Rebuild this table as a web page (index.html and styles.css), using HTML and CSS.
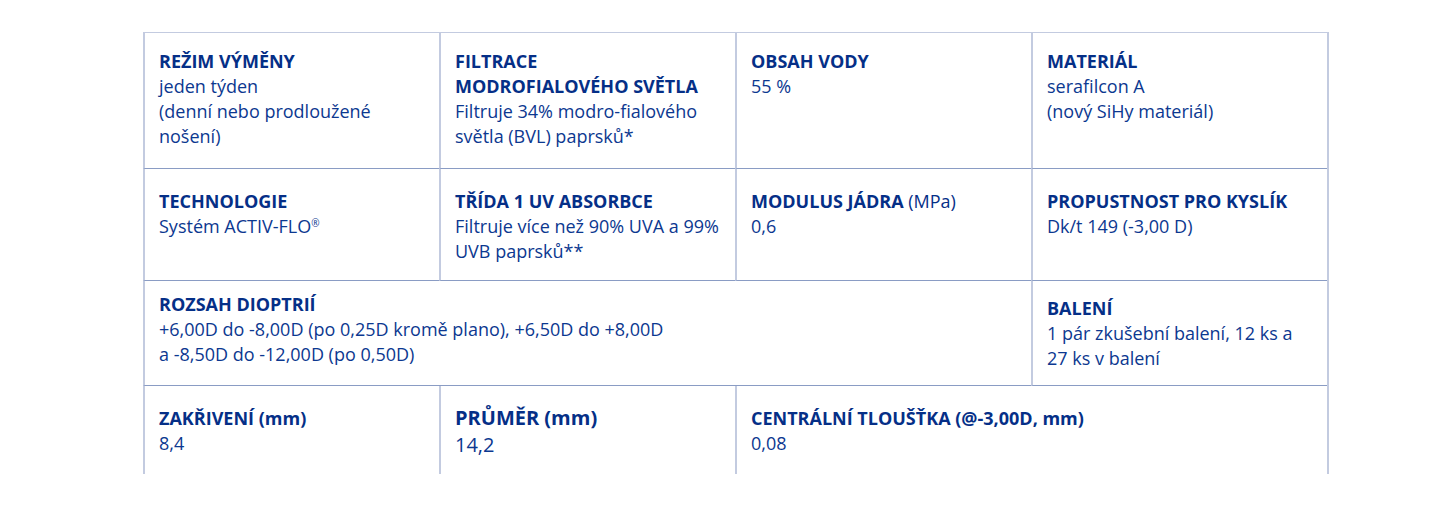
FILE: index.html
```html
<!DOCTYPE html>
<html lang="cs">
<head>
<meta charset="utf-8">
<title>Parametry</title>
<link rel="stylesheet" href="styles.css">
</head>
<body>
<div class="specs">
  <div class="cell r1">
    <div class="h">REŽIM VÝMĚNY</div>
    <div class="v">jeden týden<br>(denní nebo prodloužené<br>nošení)</div>
  </div>
  <div class="cell r1">
    <div class="h">FILTRACE<br>MODROFIALOVÉHO SVĚTLA</div>
    <div class="v">Filtruje 34% modro-fialového<br>světla (BVL) paprsků*</div>
  </div>
  <div class="cell r1">
    <div class="h">OBSAH VODY</div>
    <div class="v">55 %</div>
  </div>
  <div class="cell r1">
    <div class="h">MATERIÁL</div>
    <div class="v">serafilcon A<br>(nový SiHy materiál)</div>
  </div>

  <div class="cell r2">
    <div class="h">TECHNOLOGIE</div>
    <div class="v">Systém ACTIV-FLO<sup>®</sup></div>
  </div>
  <div class="cell r2">
    <div class="h">TŘÍDA 1 UV ABSORBCE</div>
    <div class="v">Filtruje více než 90% UVA a 99%<br>UVB paprsků**</div>
  </div>
  <div class="cell r2">
    <div class="h">MODULUS JÁDRA <span class="unit">(MPa)</span></div>
    <div class="v">0,6</div>
  </div>
  <div class="cell r2">
    <div class="h">PROPUSTNOST PRO KYSLÍK</div>
    <div class="v">Dk/t 149 (-3,00 D)</div>
  </div>

  <div class="cell r3 wide">
    <div class="h">ROZSAH DIOPTRIÍ</div>
    <div class="v">+6,00D do -8,00D (po 0,25D kromě plano), +6,50D do +8,00D<br>a -8,50D do -12,00D (po 0,50D)</div>
  </div>
  <div class="cell r3 pack">
    <div class="h">BALENÍ</div>
    <div class="v">1 pár zkušební balení, 12 ks a<br>27 ks v balení</div>
  </div>

  <div class="cell r4">
    <div class="h">ZAKŘIVENÍ (mm)</div>
    <div class="v">8,4</div>
  </div>
  <div class="cell r4 big">
    <div class="h">PRŮMĚR (mm)</div>
    <div class="v">14,2</div>
  </div>
  <div class="cell r4 span2">
    <div class="h">CENTRÁLNÍ TLOUŠŤKA (@-3,00D, mm)</div>
    <div class="v">0,08</div>
  </div>
</div>
</body>
</html>
```

FILE: styles.css
```css
html, body {
  margin: 0;
  padding: 0;
  background: #ffffff;
}

body {
  font-family: "Open Sans", "Noto Sans", "Liberation Sans", sans-serif;
  color: #0a3590;
}

.specs {
  margin: 32px 0 0 143px;
  width: 1184px;
  display: grid;
  grid-template-columns: repeat(4, 296px);
  grid-template-rows: 136px 112px 105px 88px;
  border-top: 1px solid #c3cbe0;
  border-right: 2px solid #c3cbe0;
}

.cell {
  border-left: 2px solid #c3cbe0;
  border-bottom: 1px solid #8a9cc4;
  padding: 16px 14px 0 14px;
  font-size: 18px;
  line-height: 25px;
}

.r1 { padding-top: 16px; }
.r2 { padding-top: 20px; }
.r3 { padding-top: 11px; }
.r3.pack { padding-top: 15px; }
.r4 { padding-top: 20px; border-bottom: none; }
.r4.big { padding-top: 18px; }

.wide { grid-column: span 3; }
.span2 { grid-column: span 2; }

.h {
  font-weight: 700;
  color: #052f87;
}

.v {
  font-weight: 400;
  color: #0c3890;
}

.unit {
  font-weight: 400;
}

sup {
  font-size: 10px;
  line-height: 0;
  vertical-align: 6px;
}

.big .h {
  font-size: 20px;
  line-height: 27px;
}

.big .v {
  font-size: 20px;
  line-height: 27px;
}
```
